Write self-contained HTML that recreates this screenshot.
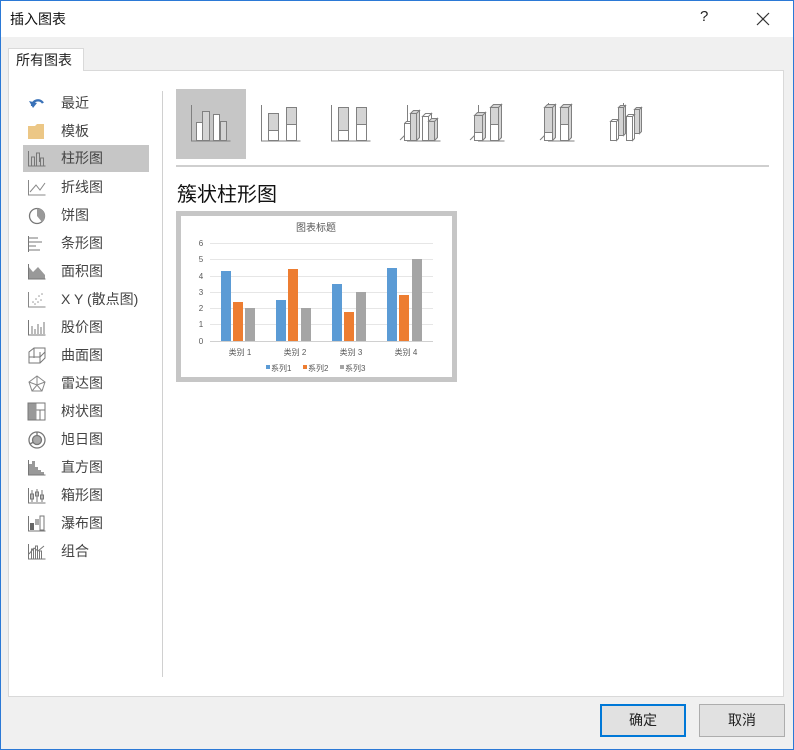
<!DOCTYPE html>
<html><head><meta charset="utf-8"><style>
*{margin:0;padding:0;box-sizing:border-box}
body{width:794px;height:750px;overflow:hidden;background:#f0f0f0;font-family:"Liberation Sans","Noto Sans CJK SC",sans-serif;color:#222;position:relative}
.abs{position:absolute}
#win{position:absolute;left:0;top:0;width:794px;height:750px;border:1px solid #2b79d6}
.item{position:absolute;left:23px;width:126px;height:27px;font-size:14px;color:#444;line-height:27px}
.item span{position:absolute;left:38px}
.item svg{position:absolute;left:4px;top:4px}
.sel{background:#c6c6c6}
</style></head><body>
<div class="abs" style="left:0;top:0;width:794px;height:37px;background:#fff"></div>
<div class="abs" style="left:10px;top:9px;font-size:14px;color:#111">插入图表</div>
<div class="abs" style="left:700px;top:8px;font-size:15px;color:#222">?</div>
<svg class="abs" style="left:756px;top:12px" width="14" height="14"><path d="M1 1L13 13M13 1L1 13" stroke="#333" stroke-width="1.2"/></svg>
<div class="abs" style="left:8px;top:70px;width:776px;height:627px;background:#fff;border:1px solid #d9d9d9"></div>
<div class="abs" style="left:8px;top:48px;width:76px;height:23px;background:#fff;border:1px solid #d9d9d9;border-bottom:none;font-size:14px;line-height:22px;padding-left:7px">所有图表</div>
<div class="abs" style="left:162px;top:91px;width:1px;height:586px;background:#d0d0d0"></div>

<div class="item" style="top:90px"><svg width="20" height="20"><path d="M5 12 A6 6 0 0 1 16 9" stroke="#3a72b8" stroke-width="2.4" fill="none"/><path d="M2 7L6 14L10 9Z" fill="#3a72b8"/></svg><span>最近</span></div>
<div class="item" style="top:118px"><svg width="20" height="20"><path d="M1 4h7l2 -2h7v15H1z" fill="#ecc786"/></svg><span>模板</span></div>
<div class="item sel" style="top:145px"><svg width="20" height="20" fill="none" stroke="#777"><path d="M1.5 2v15h17M4.5 17V8h3v9M9.5 17V4h3v9M13.5 17V9h3v8"/></svg><span>柱形图</span></div>
<div class="item" style="top:174px"><svg width="20" height="20" fill="none" stroke="#888"><path d="M1.5 2v15h17M3 14l6-7 4 5 5-7"/></svg><span>折线图</span></div>
<div class="item" style="top:202px"><svg width="20" height="20"><circle cx="10" cy="10" r="7.5" fill="#fff" stroke="#777" stroke-width="1.3"/><path d="M10 10V2.5A7.5 7.5 0 0 1 15 16Z" fill="#999"/></svg><span>饼图</span></div>
<div class="item" style="top:230px"><svg width="20" height="20" fill="none" stroke="#777"><path d="M1.5 2v16M2 4h9M2 8h13M2 12h7M2 16h11"/></svg><span>条形图</span></div>
<div class="item" style="top:258px"><svg width="20" height="20"><path d="M1 17V4l5 6 5-5 7 8v4z" fill="#999"/><path d="M1.5 2v15h17" stroke="#777" fill="none"/></svg><span>面积图</span></div>
<div class="item" style="top:286px"><svg width="20" height="20" fill="#999"><path d="M1.5 2v15h17" stroke="#888" fill="none"/><circle cx="6" cy="12" r=".8"/><circle cx="9" cy="9" r=".8"/><circle cx="12" cy="6" r=".8"/><circle cx="14" cy="10" r=".8"/><circle cx="8" cy="14" r=".8"/><circle cx="15" cy="4" r=".8"/><circle cx="11" cy="12" r=".8"/></svg><span>X Y (散点图)</span></div>
<div class="item" style="top:314px"><svg width="20" height="20" fill="none" stroke="#777"><path d="M1.5 2v15h17M5 16V8M8 16V11M11 16V6M14 16V9M17 16V4"/></svg><span>股价图</span></div>
<div class="item" style="top:342px"><svg width="20" height="20" fill="none" stroke="#777"><path d="M2 17V6l5-4h11v10l-5 5z M2 11h11l5-5M7 2v10M13 6v11"/></svg><span>曲面图</span></div>
<div class="item" style="top:370px"><svg width="20" height="20" fill="none" stroke="#888"><path d="M10 2l8 6-3 9H5L2 8z M10 2v9M2 8l8 3 8-3M5 17l5-6 5 6"/></svg><span>雷达图</span></div>
<div class="item" style="top:398px"><svg width="20" height="20"><rect x="1" y="1" width="17" height="17" fill="#fff" stroke="#777"/><rect x="1.5" y="1.5" width="8" height="16" fill="#999"/><path d="M9.5 8h8M13 8v10" stroke="#777"/></svg><span>树状图</span></div>
<div class="item" style="top:426px"><svg width="20" height="20" fill="none" stroke="#777" stroke-width="1.3"><circle cx="10" cy="10" r="8"/><circle cx="10" cy="10" r="4.5" fill="#aaa"/><path d="M10 2v3.5M3 14l3.5-2"/></svg><span>旭日图</span></div>
<div class="item" style="top:454px"><svg width="20" height="20"><path d="M2 17V6h3v-3h3v6h3v3h3v2h3v3z" fill="#999"/><path d="M1.5 2v15h17" stroke="#777" fill="none"/></svg><span>直方图</span></div>
<div class="item" style="top:482px"><svg width="20" height="20" fill="none" stroke="#777"><path d="M1.5 2v15h17M5 4v12M3.5 8h3v5h-3zM10 3v13M8.5 6h3v4h-3zM15 4v12M13.5 9h3v4h-3z"/></svg><span>箱形图</span></div>
<div class="item" style="top:510px"><svg width="20" height="20"><path d="M1.5 2v15h17" stroke="#777" fill="none"/><rect x="3" y="9" width="4" height="7" fill="#666"/><rect x="8" y="5" width="4" height="6" fill="#aaa"/><rect x="13" y="2" width="4" height="14" fill="#fff" stroke="#777"/></svg><span>瀑布图</span></div>
<div class="item" style="top:538px"><svg width="20" height="20" fill="none" stroke="#777"><path d="M1.5 2v15h17M4.5 17V7h2v10M8.5 17V4h2v13M12.5 17V9h2v8M2 12l5-6 4 3 6-5"/></svg><span>组合</span></div>

<div class="abs" style="left:176px;top:89px;width:70px;height:70px;background:#c6c6c6"></div>
<svg class="abs" style="left:176px;top:85px" width="500" height="75" fill="none" stroke="#808080" stroke-width="1">
<!-- icon1 -->
<path d="M15.5 20v36h39"/>
<rect x="20.5" y="37.5" width="6" height="18" fill="#fff"/>
<rect x="26.5" y="26.5" width="7" height="29" fill="#d4d4d4"/>
<rect x="37.5" y="29.5" width="6" height="26" fill="#fff"/>
<rect x="44.5" y="36.5" width="6" height="19" fill="#d4d4d4"/>
<!-- icon2 -->
<path d="M85.5 20v36h39"/>
<rect x="92.5" y="28.5" width="10" height="27" fill="#d4d4d4"/><rect x="92.5" y="45.5" width="10" height="10" fill="#fff"/>
<rect x="110.5" y="22.5" width="10" height="33" fill="#d4d4d4"/><rect x="110.5" y="39.5" width="10" height="16" fill="#fff"/>
<!-- icon3 -->
<path d="M155.5 20v36h39"/>
<rect x="162.5" y="22.5" width="10" height="33" fill="#d4d4d4"/><rect x="162.5" y="45.5" width="10" height="10" fill="#fff"/>
<rect x="180.5" y="22.5" width="10" height="33" fill="#d4d4d4"/><rect x="180.5" y="39.5" width="10" height="16" fill="#fff"/>
<!-- icon4 -->
<path d="M231.5 20v36h33M231 48l-7 7"/>
<path d="M228.5 55.5v-17h6v17z M228.5 38.5l2-2h6l-2 2M234.5 55.5v-17l2-2v15" fill="#fff"/>
<path d="M234.5 55.5v-27h6v27z M234.5 28.5l3-3h6l-3 3z M240.5 55.5v-27l3-3v27z" fill="#d4d4d4"/>
<path d="M246.5 55.5v-24h6v24z M246.5 31.5l3-3h6l-3 3z M252.5 55.5v-24l3-3v21z" fill="#fff"/>
<path d="M252.5 55.5v-19h6v19z M252.5 36.5l3-3h6l-3 3z M258.5 55.5v-19l3-3v19z" fill="#d4d4d4"/>
<!-- icon5 -->
<path d="M302.5 20v36h26M301 48l-7 7"/>
<path d="M298.5 55.5v-25h8v25z M298.5 30.5l3-3h8l-3 3z M306.5 55.5v-25l3-3v25z" fill="#d4d4d4"/>
<rect x="298.5" y="47.5" width="8" height="8" fill="#fff"/>
<path d="M314.5 55.5v-33h8v33z M314.5 22.5l3-3h8l-3 3z M322.5 55.5v-33l3-3v33z" fill="#d4d4d4"/>
<rect x="314.5" y="39.5" width="8" height="16" fill="#fff"/>
<!-- icon6 -->
<path d="M372.5 18v38h26M371 48l-7 7"/>
<path d="M368.5 55.5v-33h8v33z M368.5 22.5l3-3h8l-3 3z M376.5 55.5v-33l3-3v33z" fill="#d4d4d4"/>
<rect x="368.5" y="47.5" width="8" height="8" fill="#fff"/>
<path d="M384.5 55.5v-33h8v33z M384.5 22.5l3-3h8l-3 3z M392.5 55.5v-33l3-3v33z" fill="#d4d4d4"/>
<rect x="384.5" y="39.5" width="8" height="16" fill="#fff"/>
<!-- icon7 -->
<path d="M447.5 18v32M441 48l-6 6"/>
<path d="M442.5 50.5v-28h5v28z M442.5 22.5l2-2h5l-2 2z M447.5 50.5v-28l2-2v28z" fill="#d4d4d4"/>
<path d="M458.5 48.5v-24h5v24z M458.5 24.5l2-2h5l-2 2z M463.5 48.5v-24l2-2v24z" fill="#d4d4d4"/>
<path d="M434.5 55.5v-19h6v19z M434.5 36.5l2-2h6l-2 2z M440.5 55.5v-19l2-2v19z" fill="#fff"/>
<path d="M450.5 55.5v-24h6v24z M450.5 31.5l2-2h6l-2 2z M456.5 55.5v-24l2-2v24z" fill="#fff"/>
</svg>
<div class="abs" style="left:176px;top:165px;width:593px;height:2px;background:#cfcfcf"></div>
<div class="abs" style="left:177px;top:178px;font-size:20px;color:#111">簇状柱形图</div>

<svg class="abs" style="left:176px;top:211px" width="281" height="171" font-family="Liberation Sans,Noto Sans CJK SC,sans-serif">
<rect x="2.5" y="2.5" width="276" height="166" fill="#fff" stroke="#c6c6c6" stroke-width="5"/>
<text x="140" y="20" font-size="10" fill="#595959" text-anchor="middle">图表标题</text>
<g stroke="#e6e6e6" stroke-width="1">
<path d="M34 32.5h223M34 48.5h223M34 65.5h223M34 81.5h223M34 97.5h223M34 113.5h223"/></g>
<path d="M34 130.5h223" stroke="#d0d0d0"/>
<g font-size="8" fill="#595959" text-anchor="middle">
<text x="25" y="35">6</text><text x="25" y="51">5</text><text x="25" y="68">4</text><text x="25" y="84">3</text><text x="25" y="100">2</text><text x="25" y="116">1</text><text x="25" y="133">0</text>
<text x="64" y="144">类别 1</text><text x="119" y="144">类别 2</text><text x="175" y="144">类别 3</text><text x="230" y="144">类别 4</text>
</g>
<g fill="#5b9bd5"><rect x="45" y="60" width="10" height="70"/><rect x="100" y="89" width="10" height="41"/><rect x="156" y="73" width="10" height="57"/><rect x="211" y="57" width="10" height="73"/></g>
<g fill="#ed7d31"><rect x="57" y="91" width="10" height="39"/><rect x="112" y="58" width="10" height="72"/><rect x="168" y="101" width="10" height="29"/><rect x="223" y="84" width="10" height="46"/></g>
<g fill="#a5a5a5"><rect x="69" y="97" width="10" height="33"/><rect x="125" y="97" width="10" height="33"/><rect x="180" y="81" width="10" height="49"/><rect x="236" y="48" width="10" height="82"/></g>
<g font-size="8" fill="#595959">
<rect x="90" y="154" width="4" height="4" fill="#5b9bd5"/><text x="95" y="160">系列1</text>
<rect x="127" y="154" width="4" height="4" fill="#ed7d31"/><text x="132" y="160">系列2</text>
<rect x="164" y="154" width="4" height="4" fill="#a5a5a5"/><text x="169" y="160">系列3</text>
</g>
</svg>

<div class="abs" style="left:600px;top:704px;width:86px;height:33px;background:#e1e1e1;border:2px solid #0078d7;font-size:14px;text-align:center;line-height:29px">确定</div>
<div class="abs" style="left:699px;top:704px;width:86px;height:33px;background:#e1e1e1;border:1px solid #adadad;font-size:14px;text-align:center;line-height:31px">取消</div>
<div id="win"></div>
</body></html>
